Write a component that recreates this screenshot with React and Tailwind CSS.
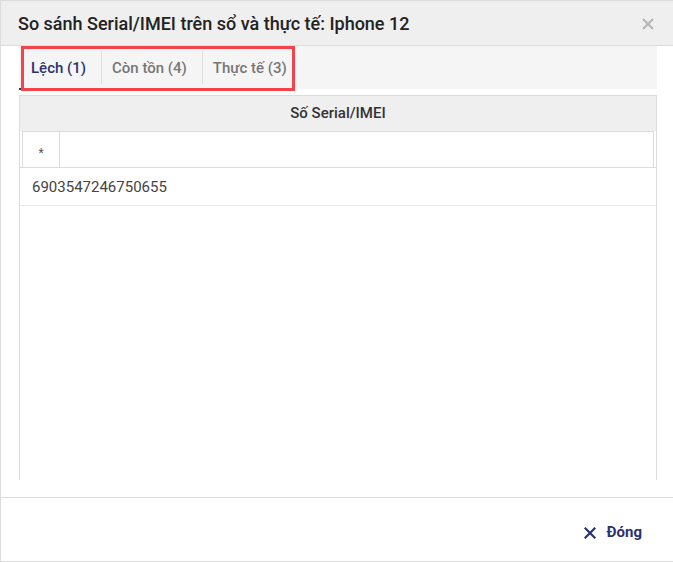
import React from 'react';

export default function App() {
    const tabs = [
        { label: 'Lệch (1)', active: true },
        { label: 'Còn tồn (4)' },
        { label: 'Thực tế (3)' },
    ];

    return (
        <div className="w-[673px] h-[562px] bg-white border-t border-l border-b border-[#dcdcdc] flex flex-col font-['Roboto',sans-serif] overflow-hidden">
            {/* Header */}
            <div className="h-[45px] shrink-0 bg-[#efefef] border-b border-[#dcdcdc] flex items-center justify-between pl-[17px] pr-[19px]">
                <h2 className="text-[18px] font-medium text-[#222]">So sánh Serial/IMEI trên sổ và thực tế: Iphone 12</h2>
                <svg width="12" height="12" viewBox="0 0 12 12" className="mt-[1px]">
                    <path d="M1 1 L11 11 M11 1 L1 11" stroke="#b5b5b5" strokeWidth="2" />
                </svg>
            </div>

            {/* Body */}
            <div className="flex-1 flex flex-col pl-[18px] pr-[16px] pb-[17px]">
                {/* Tabs */}
                <div className="relative h-[43px] shrink-0 bg-[#f5f5f5] flex items-stretch">
                    {tabs.map((t, i) => (
                        <div
                            key={t.label}
                            className={
                                'flex items-center pr-[15px] pt-[2px] text-[15px] font-medium my-[5px] ' +
                                (i === 0 ? 'pl-[12px] ' : 'pl-[10px] ') +
                                (i < tabs.length - 1 ? 'border-r border-[#dedede] ' : '') +
                                (t.active ? 'text-[#2b3270]' : 'text-[#777]')
                            }
                        >
                            {t.label}
                        </div>
                    ))}
                    <div className="absolute left-0 bottom-[-1px] w-[4px] h-[2px] bg-[#2b3270]" />
                    {/* highlight box */}
                    <div className="absolute left-[2px] top-0 w-[274px] h-[45px] border-[3px] border-[#f4444a] pointer-events-none" />
                </div>

                {/* Table */}
                <div className="mt-[6px] flex-1 border border-b-0 border-[#dcdcdc] flex flex-col">
                    <div className="h-[35px] shrink-0 bg-[#efefef] flex items-center justify-center text-[15px] font-medium text-[#333]">
                        Số Serial/IMEI
                    </div>
                    <div className="h-[37px] shrink-0 flex px-[2px] border-b border-[#dcdcdc]">
                        <div className="w-[38px] border border-[#dcdcdc] border-b-0 flex items-end justify-center pb-[5px] text-[12px] text-[#555]">*</div>
                        <div className="flex-1 border border-l-0 border-[#dcdcdc] border-b-0" />
                    </div>
                    <div className="h-[38px] shrink-0 flex items-center pl-[12px] pt-[1px] text-[15px] text-[#444] border-b border-[#eaeaea]">
                        6903547246750655
                    </div>
                    <div className="flex-1" />
                </div>
            </div>

            {/* Footer */}
            <div className="h-[64px] shrink-0 border-t border-[#dcdcdc] flex items-center justify-end pr-[31px] pt-[5px]">
                <button className="flex items-center gap-[11px] text-[#2b3270] text-[15px] font-bold">
                    <svg width="12" height="12" viewBox="0 0 12 12" className="mt-[1px]">
                        <path d="M1.5 1.5 L10.5 10.5 M10.5 1.5 L1.5 10.5" stroke="#2b3270" strokeWidth="2.2" strokeLinecap="square" />
                    </svg>
                    Đóng
                </button>
            </div>
        </div>
    );
}
